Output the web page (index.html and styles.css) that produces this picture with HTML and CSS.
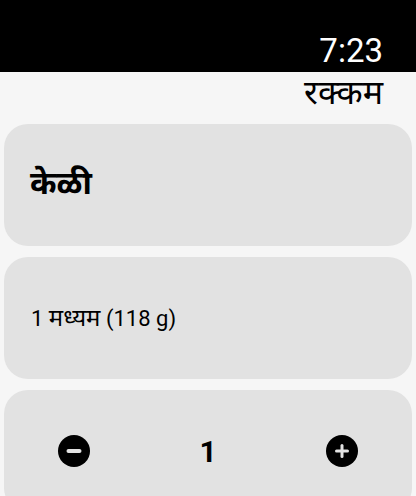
FILE: index.html
```html
<!DOCTYPE html>
<html lang="mr">
<head>
<meta charset="utf-8">
<link rel="stylesheet" href="styles.css">
</head>
<body>
<div class="screen">
  <div class="status-bar"><span class="time">7:23</span></div>
  <div class="title-row"><h1 class="title">रक्कम</h1></div>
  <div class="cards">
    <div class="card"><span class="food-name">केळी</span></div>
    <div class="card"><span class="portion">1 <span class="dev">मध्यम</span> (118 g)</span></div>
    <div class="card stepper">
      <svg class="step-icon" viewBox="0 0 32 32" width="32" height="32" aria-label="minus">
        <circle cx="16" cy="16" r="16" fill="#000"/>
        <rect x="8.5" y="14" width="15" height="4" rx="2" fill="#e2e2e2"/>
      </svg>
      <span class="count">1</span>
      <svg class="step-icon" viewBox="0 0 32 32" width="32" height="32" aria-label="plus">
        <circle cx="16" cy="16" r="16" fill="#000"/>
        <rect x="9" y="14.5" width="14" height="3" rx="1.5" fill="#e2e2e2"/>
        <rect x="14.5" y="9" width="3" height="14" rx="1.5" fill="#e2e2e2"/>
      </svg>
    </div>
  </div>
</div>
</body>
</html>
```

FILE: styles.css
```css
html, body {
  margin: 0;
  padding: 0;
}
body {
  background: #f6f6f6;
  font-family: Roboto, "Noto Sans Devanagari", "Noto Sans", sans-serif;
  color: #000;
  width: 416px;
  height: 496px;
  overflow: hidden;
}
.screen {
  display: flex;
  flex-direction: column;
}
.status-bar {
  background: #000;
  height: 72px;
  display: flex;
  justify-content: flex-end;
  align-items: flex-end;
  padding: 0 33px 0 0;
  box-sizing: border-box;
}
.time {
  color: #fff;
  font-size: 33px;
  line-height: 1;
  padding-bottom: 5px;
}
.title-row {
  height: 52px;
  display: flex;
  justify-content: flex-end;
  padding-right: 33px;
}
.title {
  margin: 0;
  font-size: 34px;
  font-weight: 400;
  line-height: 40px;
}
.cards {
  display: flex;
  flex-direction: column;
  gap: 11px;
  padding: 0 4px;
}
.card {
  background: #e2e2e2;
  border-radius: 24px;
  height: 122px;
  display: flex;
  align-items: center;
  padding-left: 26px;
  box-sizing: border-box;
  flex-shrink: 0;
}
.food-name {
  font-size: 32px;
  font-weight: 700;
}
.portion {
  font-size: 22px;
  padding-left: 1px;
  padding-top: 4px;
}
.portion .dev {
  font-size: 24px;
}
.stepper {
  justify-content: space-between;
  padding: 0 54px;
}
.step-icon {
  display: block;
}
.count {
  font-size: 30px;
  font-weight: 700;
}
```
